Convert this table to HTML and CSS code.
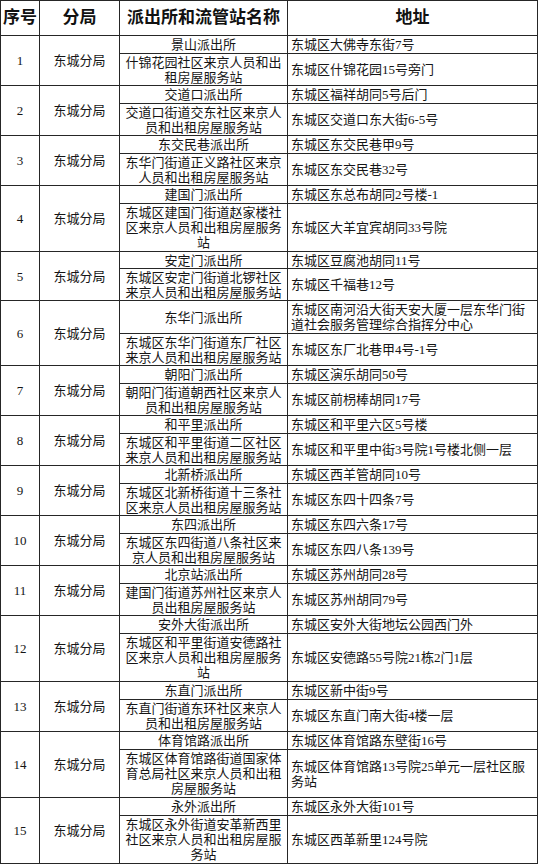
FILE: index.html
```html
<!DOCTYPE html>
<html lang="zh-CN">
<head>
<meta charset="utf-8">
<title>派出所和流管站名称</title>
<link rel="stylesheet" href="styles.css">
</head>
<body>
<div class="sheet">
  <div class="row head">
    <div class="c">序号</div>
    <div class="c">分局</div>
    <div class="c">派出所和流管站名称</div>
    <div class="c">地址</div>
  </div>

  <div class="row std">
    <div class="c seq">1</div><div class="c bur">东城分局</div>
    <div class="c nm">景山派出所</div><div class="c ad">东城区大佛寺东街7号</div>
    <div class="c nm">什锦花园社区来京人员和出<br>租房屋服务站</div><div class="c ad">东城区什锦花园15号旁门</div>
  </div>

  <div class="row std">
    <div class="c seq">2</div><div class="c bur">东城分局</div>
    <div class="c nm">交道口派出所</div><div class="c ad">东城区福祥胡同5号后门</div>
    <div class="c nm">交道口街道交东社区来京人<br>员和出租房屋服务站</div><div class="c ad">东城区交道口东大街6-5号</div>
  </div>

  <div class="row std">
    <div class="c seq">3</div><div class="c bur">东城分局</div>
    <div class="c nm">东交民巷派出所</div><div class="c ad">东城区东交民巷甲9号</div>
    <div class="c nm">东华门街道正义路社区来京<br>人员和出租房屋服务站</div><div class="c ad">东城区东交民巷32号</div>
  </div>

  <div class="row tall">
    <div class="c seq">4</div><div class="c bur">东城分局</div>
    <div class="c nm">建国门派出所</div><div class="c ad">东城区东总布胡同2号楼-1</div>
    <div class="c nm">东城区建国门街道赵家楼社<br>区来京人员和出租房屋服务<br>站</div><div class="c ad">东城区大羊宜宾胡同33号院</div>
  </div>

  <div class="row short">
    <div class="c seq">5</div><div class="c bur">东城分局</div>
    <div class="c nm">安定门派出所</div><div class="c ad">东城区豆腐池胡同11号</div>
    <div class="c nm">东城区安定门街道北锣社区<br>来京人员和出租房屋服务站</div><div class="c ad">东城区千福巷12号</div>
  </div>

  <div class="row dbl">
    <div class="c seq">6</div><div class="c bur">东城分局</div>
    <div class="c nm">东华门派出所</div><div class="c ad">东城区南河沿大街天安大厦一层东华门街<br>道社会服务管理综合指挥分中心</div>
    <div class="c nm">东城区东华门街道东厂社区<br>来京人员和出租房屋服务站</div><div class="c ad">东城区东厂北巷甲4号-1号</div>
  </div>

  <div class="row std">
    <div class="c seq">7</div><div class="c bur">东城分局</div>
    <div class="c nm">朝阳门派出所</div><div class="c ad">东城区演乐胡同50号</div>
    <div class="c nm">朝阳门街道朝西社区来京人<br>员和出租房屋服务站</div><div class="c ad">东城区前枴棒胡同17号</div>
  </div>

  <div class="row std">
    <div class="c seq">8</div><div class="c bur">东城分局</div>
    <div class="c nm">和平里派出所</div><div class="c ad">东城区和平里六区5号楼</div>
    <div class="c nm">东城区和平里街道二区社区<br>来京人员和出租房屋服务站</div><div class="c ad">东城区和平里中街3号院1号楼北侧一层</div>
  </div>

  <div class="row std">
    <div class="c seq">9</div><div class="c bur">东城分局</div>
    <div class="c nm">北新桥派出所</div><div class="c ad">东城区西羊管胡同10号</div>
    <div class="c nm">东城区北新桥街道十三条社<br>区来京人员出租房屋服务站</div><div class="c ad">东城区东四十四条7号</div>
  </div>

  <div class="row std">
    <div class="c seq">10</div><div class="c bur">东城分局</div>
    <div class="c nm">东四派出所</div><div class="c ad">东城区东四六条17号</div>
    <div class="c nm">东城区东四街道八条社区来<br>京人员和出租房屋服务站</div><div class="c ad">东城区东四八条139号</div>
  </div>

  <div class="row std">
    <div class="c seq">11</div><div class="c bur">东城分局</div>
    <div class="c nm">北京站派出所</div><div class="c ad">东城区苏州胡同28号</div>
    <div class="c nm">建国门街道苏州社区来京人<br>员出租房屋服务站</div><div class="c ad">东城区苏州胡同79号</div>
  </div>

  <div class="row tall">
    <div class="c seq">12</div><div class="c bur">东城分局</div>
    <div class="c nm">安外大街派出所</div><div class="c ad">东城区安外大街地坛公园西门外</div>
    <div class="c nm">东城区和平里街道安德路社<br>区来京人员和出租房屋服务<br>站</div><div class="c ad">东城区安德路55号院21栋2门1层</div>
  </div>

  <div class="row std">
    <div class="c seq">13</div><div class="c bur">东城分局</div>
    <div class="c nm">东直门派出所</div><div class="c ad">东城区新中街9号</div>
    <div class="c nm">东直门街道东环社区来京人<br>员和出租房屋服务站</div><div class="c ad">东城区东直门南大街4楼一层</div>
  </div>

  <div class="row tall">
    <div class="c seq">14</div><div class="c bur">东城分局</div>
    <div class="c nm">体育馆路派出所</div><div class="c ad">东城区体育馆路东壁街16号</div>
    <div class="c nm">东城区体育馆路街道国家体<br>育总局社区来京人员和出租<br>房屋服务站</div><div class="c ad">东城区体育馆路13号院25单元一层社区服<br>务站</div>
  </div>

  <div class="row tall">
    <div class="c seq">15</div><div class="c bur">东城分局</div>
    <div class="c nm">永外派出所</div><div class="c ad">东城区永外大街101号</div>
    <div class="c nm">东城区永外街道安革新西里<br>社区来京人员和出租房屋服<br>务站</div><div class="c ad">东城区西革新里124号院</div>
  </div>
</div>
</body>
</html>
```

FILE: styles.css
```css
html, body {
  margin: 0;
  padding: 0;
  background: #ffffff;
  overflow: hidden;
}

body {
  width: 541px;
  height: 866px;
  font-family: "Liberation Serif", "Noto Sans CJK SC", serif;
  font-size: 13px;
  line-height: 15px;
  color: #151515;
}

.sheet {
  width: 538px;
  display: flex;
  flex-direction: column;
  gap: 1px;
  padding: 1px 0;
  background: #262626;
}

.row {
  display: grid;
  grid-template-columns: 38px 79px 167px 249px;
  gap: 1px;
  padding: 0 1px;
}

.row.head { grid-template-rows: 34px; }
.row.std { grid-template-rows: 17px 31px; }
.row.short { grid-template-rows: 16px 31px; }
.row.tall { grid-template-rows: 17px 47px; }
.row.dbl { grid-template-rows: 32px 31px; }

.c {
  background: #ffffff;
  display: flex;
  align-items: center;
  justify-content: center;
  text-align: center;
  white-space: nowrap;
  overflow: hidden;
}

.head .c {
  font-weight: 700;
  font-size: 17px;
  line-height: 20px;
  color: #111;
}

.seq, .bur {
  grid-row: span 2;
}

.seq { grid-column: 1; }
.bur { grid-column: 2; }
.nm { grid-column: 3; }

.ad {
  grid-column: 4;
  justify-content: flex-start;
  text-align: left;
  padding-left: 3px;
}
```
